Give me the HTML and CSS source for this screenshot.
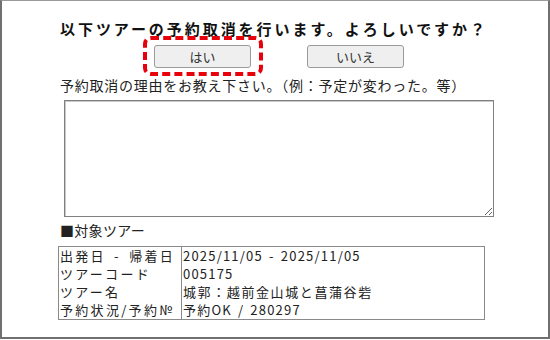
FILE: index.html
```html
<!DOCTYPE html>
<html lang="ja">
<head>
  <meta charset="UTF-8">
  <title>予約取消</title>
  <link rel="stylesheet" href="styles.css">
</head>
<body>

<div class="frame">
  <p class="title">以下ツアーの予約取消を行います。よろしいですか？</p>

  <div class="buttons">
    <button class="btn btn-yes">はい</button>
    <button class="btn">いいえ</button>
  </div>

  <p class="reason">予約取消の理由をお教え下さい。（例：予定が変わった。等）</p>
  <textarea class="reason-box"></textarea>

  <p class="heading">■対象ツアー</p>
  <table class="tour">
    <tr><td class="label">出発日 - 帰着日</td><td class="num">2025/11/05 - 2025/11/05</td></tr>
    <tr><td class="label">ツアーコード</td><td class="num">005175</td></tr>
    <tr><td class="label">ツアー名</td><td class="name">城郭：越前金山城と菖蒲谷砦</td></tr>
    <tr><td class="label">予約状況/予約№</td><td class="num">予約OK / 280297</td></tr>
  </table>
</div>

</body>
</html>
```

FILE: styles.css
```css
* { box-sizing: border-box; }
body {
  margin: 0;
  background: #fff;
  color: #222;
  font-family: "Noto Sans CJK JP", sans-serif;
  font-size: 14px;
}
p { margin: 0; }
.frame {
  width: 550px;
  height: 339px;
  border: 2px solid #707070;
  border-top: 1px solid #999;
  padding: 18px 0 0 58px;
}
.title {
  font-size: 15px;
  font-weight: bold;
  letter-spacing: 2.95px;
  line-height: 20px;
  color: #111;
}
.buttons {
  display: flex;
  gap: 56px;
  margin: 6px 0 0 94px;
}
.btn {
  width: 97px;
  height: 23px;
  padding: 0;
  font-family: inherit;
  font-size: 13px;
  color: #333;
  background: #efefef;
  border: 1px solid #9a9a9a;
  border-radius: 3px;
}
.btn-yes { position: relative; }
.btn-yes::after {
  content: "";
  position: absolute;
  top: -10px; left: -12px; right: -13px; bottom: -9px;
  border: 4px dashed #e8000b;
  border-radius: 8px;
}
.reason {
  margin-top: 7px;
  letter-spacing: 0.75px;
  line-height: 20px;
}
.reason-box {
  display: block;
  width: 430px;
  height: 117px;
  margin: 5px 0 0 4px;
  border: 1px solid #808080;
  box-shadow: inset 1px 1px 0 #c8c8c8;
}
.heading {
  margin-top: 3px;
  line-height: 20px;
  font-size: 14px;
  letter-spacing: 0.3px;
}
.tour {
  margin: 6px 0 0 -2px;
  width: 427px;
  border-collapse: collapse;
  border: 1px solid #8a8a8a;
  font-size: 13px;
}
.tour td {
  height: 18px;
  line-height: 18px;
  padding: 0 2px 0 1px;
  vertical-align: middle;
}
.tour td.label {
  width: 123px;
  letter-spacing: 2.3px;
  word-spacing: 3px;
  border-right: 1px solid #8a8a8a;
}
.tour td.num { letter-spacing: 1.2px; word-spacing: 2px; }
.tour td.name { letter-spacing: 1.6px; }
```
